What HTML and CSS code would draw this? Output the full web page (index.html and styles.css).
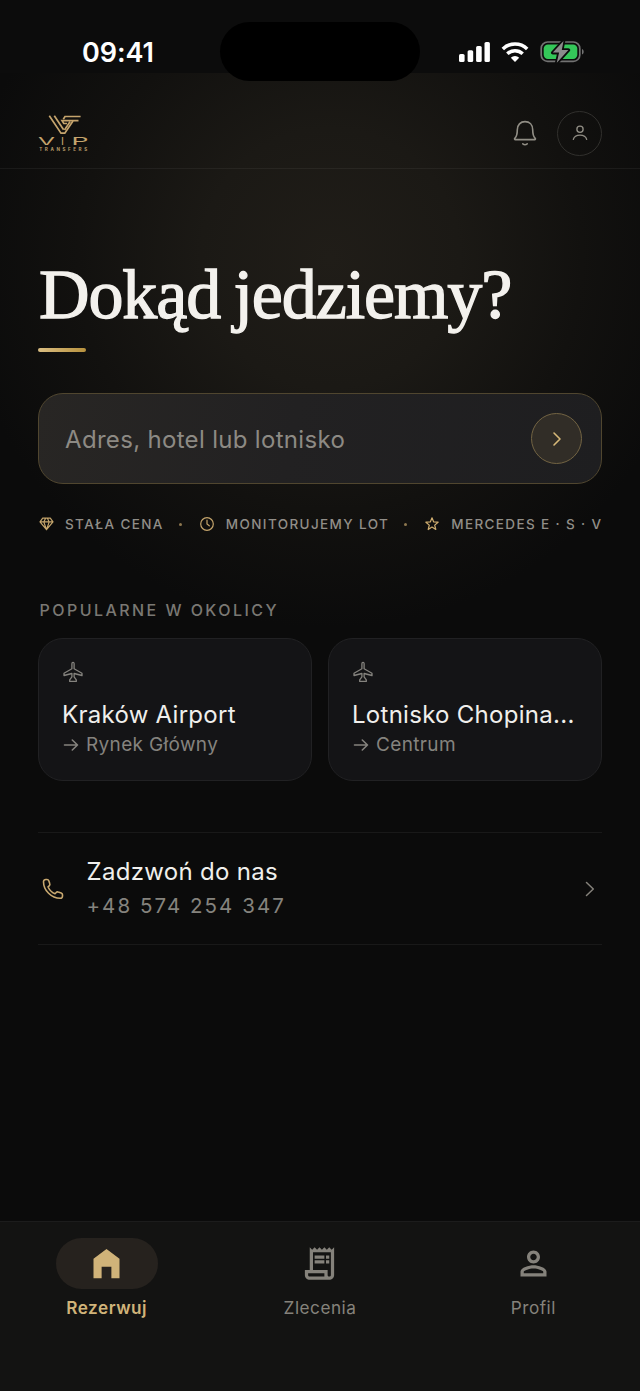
FILE: index.html
```html
<!DOCTYPE html>
<html lang="pl">
<head>
<meta charset="utf-8">
<title>VIP Transfers</title>
<link rel="stylesheet" href="styles.css">
</head>
<body>
<div class="app">
  <div class="status">
    <span class="time">09:41</span>
    <span class="island"></span>
    <svg class="status-icons" width="126" height="24" viewBox="0 0 126 24">
      <g fill="#fff">
        <rect x="1" y="14" width="5.6" height="8" rx="1.6"/><rect x="9.6" y="10.2" width="5.6" height="11.8" rx="1.6"/><rect x="18.1" y="6" width="5.6" height="16" rx="1.6"/><rect x="26.5" y="2" width="5.4" height="20" rx="1.6"/>
        <path d="M57 22l-4.2-4.3a6.2 6.2 0 0 1 8.4 0z"/>
      </g>
      <g fill="none" stroke="#fff" stroke-width="3.5"><path d="M44.8 8.9a17.4 17.4 0 0 1 24.4 0"/><path d="M49.3 13.8a11.4 11.4 0 0 1 15.4 0"/></g>
      <rect x="83.2" y="2" width="38.6" height="19.4" rx="6.5" fill="none" stroke="#727272" stroke-width="1.7"/>
      <path d="M124 8.9c2.2.8 2.2 4.8 0 5.6z" fill="#727272"/>
      <rect x="85.7" y="4.4" width="33.6" height="14.6" rx="4.2" fill="#34c759"/>
      <path d="M105.5 1L94.8 12.600h6.300L98.800 22.700 110.400 10h-6.600z" fill="#8b8b8b" stroke="#0c0c0c" stroke-width="3.600" stroke-linejoin="round" paint-order="stroke"/>
    </svg>
  </div>

  <div class="screen">
    <header class="top">
      <svg class="logo" width="50" height="38" viewBox="0 0 50 38">
        <g fill="none" stroke="#c5a46d" stroke-width="1.700">
          <path d="M11.300 1.700L23 19.200H26.800L35 7"/><path d="M16.300 1.700L25.600 15.800"/><path d="M42.600 2.500H27L25.300 5.200"/><path d="M40.500 6.700H24L25.800 9.500H29"/><path d="M32.200 7.500L26.500 16"/>
        </g>
        <g class="logo-main">
          <text x="0" y="31" textLength="17" lengthAdjust="spacingAndGlyphs">V</text>
          <text x="23" y="31">I</text>
          <text x="33.500" y="31" textLength="17" lengthAdjust="spacingAndGlyphs">P</text>
        </g>
        <text class="logo-sub" x="1.200" y="36.900" textLength="48">TRANSFERS</text>
      </svg>
      <div class="top-actions">
        <svg width="26" height="28" viewBox="0 0 26 28" fill="none" stroke="#918e85" stroke-width="1.600" stroke-linecap="round" stroke-linejoin="round"><path d="M2.800 19.400C4.800 17.500 5.300 14.800 5.300 10.800 5.300 5.800 8.500 2.600 13 2.600s7.700 3.200 7.700 8.200c0 4 .5 6.700 2.500 8.600.5.500.2 1.200-.5 1.200H3.300c-.7 0-1-.7-.5-1.200zM10.800 24.800c1.200 1 3.200 1 4.400 0"/></svg>
        <span class="avatar"><svg width="16" height="16" viewBox="0 0 18 18" fill="none" stroke="#918e85" stroke-width="1.500" stroke-linecap="round"><circle cx="9" cy="4.800" r="3.500"/><path d="M1.500 16.200c.8-3 3.800-4.800 7.500-4.800s6.700 1.800 7.500 4.800"/></svg></span>
      </div>
    </header>

    <main class="content">
      <h1 class="headline">Dokąd jedziemy?</h1>
      <div class="rule"></div>
      <div class="search">
        <span class="placeholder">Adres, hotel lub lotnisko</span>
        <span class="go"><svg width="10" height="16" viewBox="0 0 10 16" fill="none" stroke="#d6b878" stroke-width="1.600" stroke-linecap="round" stroke-linejoin="round"><path d="M2 2l6 6-6 6"/></svg></span>
      </div>

      <div class="perks">
        <svg width="16" height="16" viewBox="0 0 16 16" fill="none" stroke="#c5a56c" stroke-width="1.200" stroke-linejoin="round"><path d="M4.700 2.200h7.600l2.700 3.700L8.500 13.700 2 5.900zM2 5.900h13M5.800 5.900l2.700 7.800 2.700-7.800-1.800-3.700M5.800 5.900l1.800-3.700"/></svg>
        <span class="perk">STAŁA CENA</span><i class="dot"></i>
        <svg width="16" height="16" viewBox="0 0 16 16" fill="none" stroke="#c5a56c" stroke-width="1.200" stroke-linecap="round"><circle cx="8" cy="8" r="6.300"/><path d="M8 4.200V8l2.300 1.800"/></svg>
        <span class="perk">MONITORUJEMY LOT</span><i class="dot"></i>
        <svg width="16" height="16" viewBox="0 0 16 16" fill="none" stroke="#d0ae70" stroke-width="1.200" stroke-linejoin="round"><path d="M8 1.800l1.700 4.100 4.400.3-3.400 2.900 1.100 4.400L8 11.100l-3.800 2.400 1.100-4.400-3.400-2.900 4.400-.3z"/></svg>
        <span class="perk">MERCEDES E · S · V</span>
      </div>

      <h2 class="section">POPULARNE W OKOLICY</h2>
      <div class="cards">
        <div class="card">
          <svg width="22" height="22" viewBox="0 0 22 22" fill="none" stroke="#85837e" stroke-width="1.300" stroke-linejoin="round"><path d="M11 1.300c-.8 0-1.100.7-1.100 1.500v5L2 12.300v2.200l7.900-2v3.300l-2.200 3v1.600h6.600v-1.600l-2.200-3v-3.300l7.900 2v-2.200l-7.900-4.500v-5c0-.8-.3-1.500-1.100-1.500z"/></svg>
          <div class="card-title">Kraków Airport</div>
          <div class="card-sub"><svg width="17" height="14" viewBox="0 0 17 14"><path d="M1.500 7h13M9.300 2l5.200 5-5.200 5"/></svg><span>Rynek Główny</span></div>
        </div>
        <div class="card">
          <svg width="22" height="22" viewBox="0 0 22 22" fill="none" stroke="#85837e" stroke-width="1.300" stroke-linejoin="round"><path d="M11 1.300c-.8 0-1.100.7-1.100 1.500v5L2 12.300v2.200l7.900-2v3.300l-2.200 3v1.600h6.600v-1.600l-2.200-3v-3.300l7.900 2v-2.200l-7.900-4.500v-5c0-.8-.3-1.500-1.100-1.500z"/></svg>
          <div class="card-title">Lotnisko Chopina...</div>
          <div class="card-sub"><svg width="17" height="14" viewBox="0 0 17 14"><path d="M1.500 7h13M9.300 2l5.200 5-5.200 5"/></svg><span>Centrum</span></div>
        </div>
      </div>

      <div class="call">
        <svg width="24" height="24" viewBox="0 0 24 24" fill="none" stroke="#c9a970" stroke-width="1.600" stroke-linejoin="round"><path d="M2.500 4.700c0-1.400 1-2.200 2.300-2.200H6c.9 0 1.500.5 1.800 1.300l1 3c.3.800 0 1.500-.6 2L7 9.800c1.200 3 3.900 5.700 7 7l1.200-1.300c.5-.6 1.300-.8 2-.5l3 1c.8.300 1.300.9 1.300 1.800v1.200c0 1.400-1 2.300-2.300 2.300C10.500 21.300 2.500 13.500 2.500 4.700z"/></svg>
        <div class="call-text"><div class="call-title">Zadzwoń do nas</div><div class="call-number">+48 574 254 347</div></div>
        <svg width="10" height="18" viewBox="0 0 10 18" fill="none" stroke="#85827b" stroke-width="1.500" stroke-linecap="round" stroke-linejoin="round"><path d="M1.500 2.500L8.300 9l-6.800 6.500"/></svg>
      </div>
    </main>
  </div>

  <nav class="tabs">
    <div class="tab active"><span class="pill"><svg width="39" height="39" viewBox="0 0 24 24"><path d="M4 21V9l8-6 8 6v12h-5v-7H9v7z"/></svg></span><span class="label">Rezerwuj</span></div>
    <div class="tab"><span class="pill"><svg width="39" height="39" viewBox="0 0 24 24"><path d="M19.500 3.500 18 2l-1.500 1.500L15 2l-1.500 1.500L12 2l-1.500 1.500L9 2 7.500 3.500 6 2v14H3v3c0 1.660 1.340 3 3 3h12c1.660 0 3-1.340 3-3V2l-1.500 1.500zM15 20H6c-.55 0-1-.45-1-1v-1h10v2zm4-1c0 .55-.45 1-1 1s-1-.45-1-1v-3H8V5h11v14z"/><path d="M9 7h6v2H9zM16 7h2v2h-2zM9 10h6v2H9zM16 10h2v2h-2z"/></svg></span><span class="label">Zlecenia</span></div>
    <div class="tab"><span class="pill"><svg width="39" height="39" viewBox="0 0 24 24"><path d="M12 6c1.100 0 2 .9 2 2s-.9 2-2 2-2-.9-2-2 .9-2 2-2m0 9c2.700 0 5.800 1.290 6 2v1H6v-.99c.2-.72 3.300-2.010 6-2.010m0-11C9.790 4 8 5.790 8 8s1.790 4 4 4 4-1.790 4-4-1.790-4-4-4m0 9c-2.670 0-8 1.340-8 4v3h16v-3c0-2.660-5.330-4-8-4"/></svg></span><span class="label">Profil</span></div>
  </nav>
</div>
</body>
</html>
```
FILE: styles.css
```css
* { box-sizing: border-box; margin: 0; padding: 0; }
body { background: #0b0b0b; font-family: Inter, "Liberation Sans", sans-serif; }
svg { display: block; flex: none; }
.app { width: 640px; height: 1391px; display: flex; flex-direction: column; overflow: hidden; background: #0b0b0b; }
.status { position: relative; height: 73px; background: #0c0c0c; flex: none; display: flex; align-items: flex-start; justify-content: space-between; padding: 0 56px 0 82px; }
.time { color: #fff; font-weight: 600; font-size: 27px; line-height: 32px; letter-spacing: -.1px; margin-top: 37px; }
.island { position: absolute; left: 220px; top: 22px; width: 200px; height: 59px; border-radius: 30px; background: #000; z-index: 2; }
.status-icons { margin-top: 40px; }
.screen { flex: 1; background: radial-gradient(circle 370px at 330px 185px, #201d18 0, #1b1915 35%, #12110f 68%, #0b0b0b 100%); }
.top { height: 96px; padding: 25px 38px 0; border-bottom: 1px solid rgba(255,255,255,.055); display: flex; justify-content: space-between; align-items: center; }
.logo-main { font: 400 11px Inter, sans-serif; fill: #c5a46d; }
.logo-sub { font: 700 4.600px Inter, sans-serif; fill: #b99b68; }
.top-actions { display: flex; align-items: center; gap: 19px; }
.avatar { width: 45px; height: 45px; border: 1px solid #31302d; border-radius: 50%; display: grid; place-items: center; }
.content { padding: 0 38px; }
.headline { height: 86px; margin-top: 83px; padding-left: 1px; font: 400 70px/86px "Liberation Serif", serif; letter-spacing: -1.100px; word-spacing: -3px; color: #f3f1ed; white-space: nowrap; -webkit-text-stroke: 1.300px #f3f1ed; }
.rule { width: 48px; height: 4px; margin-top: 10px; border-radius: 2px; background: linear-gradient(90deg, #d9bd82, #b8923e); }
.search { margin-top: 41px; height: 91px; border: 1px solid #50462f; border-radius: 25px; background: linear-gradient(100deg, #282624, #222122 45%, #1e1e20); padding: 0 19px 0 26px; display: flex; align-items: center; justify-content: space-between; }
.placeholder { font-size: 24px; letter-spacing: .32px; color: #8d8a84; white-space: nowrap; padding-top: 1px; }
.go { width: 51px; height: 51px; border-radius: 50%; border: 1px solid #736443; background: #312d27; display: grid; place-items: center; }
.perks { margin-top: 30px; height: 20px; display: flex; align-items: center; white-space: nowrap; }
.perk { flex: none; font-size: 13.500px; font-weight: 500; letter-spacing: 1.380px; color: #918e88; margin-left: 11px; }
.dot { flex: none; width: 3px; height: 3px; border-radius: 50%; background: #8d774f; margin: 0 17px 0 15px; }
.section { margin: 66px 0 0 1.500px; font-size: 16px; line-height: 20px; font-weight: 500; letter-spacing: 2.450px; color: #7a7873; white-space: nowrap; }
.cards { margin-top: 18px; display: grid; grid-template-columns: 1fr 1fr; gap: 16px; }
.card { height: 143px; border: 1px solid #212123; border-radius: 25px; background: #141416; padding: 22px 23px; white-space: nowrap; }
.card-title { margin-top: 17px; font-size: 24px; line-height: 30px; letter-spacing: .28px; color: #f0efec; }
.card-sub { display: flex; align-items: center; gap: 6px; font-size: 19px; line-height: 30px; letter-spacing: .35px; color: #85837e; padding-left: 1px; }
.card-sub svg { fill: none; stroke: #85837e; stroke-width: 1.600; stroke-linecap: round; stroke-linejoin: round; }
.call { margin-top: 51px; height: 113px; border: solid #191919; border-width: 1px 0; display: flex; align-items: center; padding: 0 7px 0 3px; }
.call-text { flex: 1; margin-left: 21.500px; }
.call-title { font-size: 24px; line-height: 32px; letter-spacing: .3px; color: #f0efec; }
.call-number { font-size: 20.500px; line-height: 33px; letter-spacing: 2.050px; color: #85837e; padding-top: 1px; }
.tabs { height: 170px; flex: none; border-top: 1px solid #1c1c1c; background: #131312; display: grid; grid-template-columns: repeat(3, 1fr); padding-top: 16px; }
.tab { display: flex; flex-direction: column; align-items: center; fill: #85827b; color: #85827b; }
.pill { width: 102px; height: 51px; border-radius: 26px; display: grid; place-items: center; }
.label { margin-top: 7px; font-size: 17.200px; line-height: 24px; letter-spacing: .5px; }
.active { fill: #d0b379; color: #d0b379; }
.active .pill { background: #26221e; }
.active .label { font-weight: 600; }
```
